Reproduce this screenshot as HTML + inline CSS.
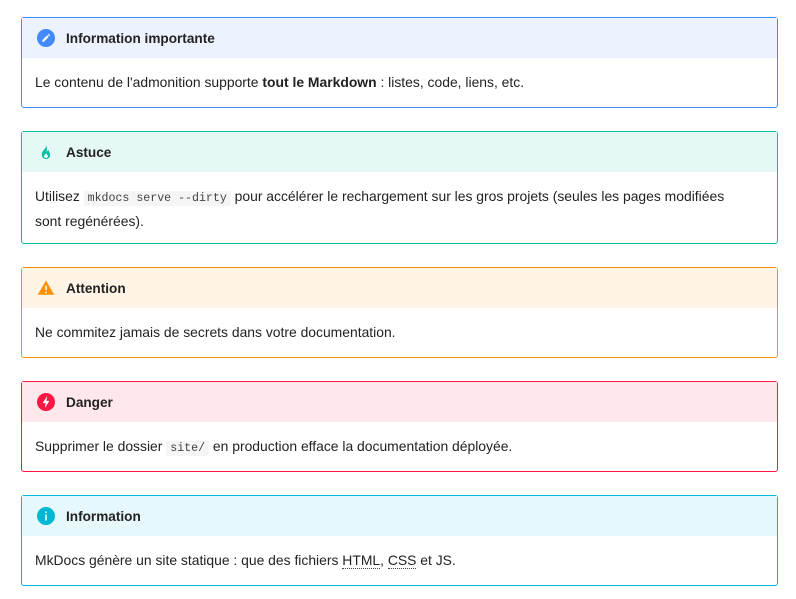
<!DOCTYPE html>
<html><head><meta charset="utf-8"><style>
body{margin:0;background:#fff;font-family:"Liberation Sans",sans-serif;font-size:13.9px;color:#222;}
.ad{position:absolute;left:21px;width:755px;border-radius:3px;}
.t{height:40px;display:flex;align-items:center;font-weight:bold;font-size:13.6px;}
.t svg{width:18px;height:18px;margin-left:15px;margin-right:11px;}
.b{padding:13px 13px 16px;line-height:22px;}
code{font-family:"Liberation Mono",monospace;font-size:11.6px;background:#f5f5f5;padding:1px 4px;color:#444;}
abbr{text-decoration:none;border-bottom:1px dotted #444;}
</style></head><body>
<div class="ad" style="top:17px;height:89px;border:1px solid #448aff">
<div class="t" style="background:#ecf3ff"><svg viewBox="0 0 24 24"><circle cx="12" cy="12" r="12" fill="#448aff"/><path d="M7 17v-2.2l6.5-6.5 2.2 2.2L9.2 17zM14.3 7.5l1.1-1.1 2.2 2.2-1.1 1.1z" fill="#fff"/></svg>Information importante</div>
<div class="b">Le contenu de l'admonition supporte <b>tout le Markdown</b> : listes, code, liens, etc.</div></div>

<div class="ad" style="top:131px;height:111px;border:1px solid #00bfa5">
<div class="t" style="background:#e6f8f5"><svg viewBox="0 0 24 24"><path d="M12 2c1 3-1 5-3 7.5S6 13 6.5 16a5.5 5.5 0 0 0 11 0c0-3-2-4.5-2.5-7-1 1.5-1.5 2.5-2.5 3C13.5 9 13.5 5 12 2z" fill="#00bfa5"/><path d="M12 20a2.5 2.5 0 0 1-2.5-2.5c0-1.5 1.5-2.5 2.5-4 .5 1.5 2.5 2.5 2.5 4A2.5 2.5 0 0 1 12 20z" fill="#fff"/></svg>Astuce</div>
<div class="b">Utilisez <code>mkdocs serve --dirty</code> pour accélérer le rechargement sur les gros projets (seules les pages modifiées<br>sont regénérées).</div></div>

<div class="ad" style="top:267px;height:89px;border:1px solid #ff9100">
<div class="t" style="background:#fff4e6"><svg viewBox="0 0 24 24"><path d="M12 2L1 21h22z" fill="#ff9100"/><path d="M11 9h2v6h-2zM11 17h2v2h-2z" fill="#fff"/></svg>Attention</div>
<div class="b">Ne commitez jamais de secrets dans votre documentation.</div></div>

<div class="ad" style="top:381px;height:89px;border:1px solid #ff1744">
<div class="t" style="background:#ffe8ec"><svg viewBox="0 0 24 24"><circle cx="12" cy="12" r="12" fill="#ff1744"/><path d="M13.5 4L7.5 13.5h4L10.5 20l6-9.5h-4z" fill="#fff"/></svg>Danger</div>
<div class="b">Supprimer le dossier <code>site/</code> en production efface la documentation déployée.</div></div>

<div class="ad" style="top:495px;height:89px;border:1px solid #00b8d4">
<div class="t" style="background:#e6f8fb"><svg viewBox="0 0 24 24"><circle cx="12" cy="12" r="12" fill="#00b8d4"/><path d="M11 10h2v8h-2zM11 6h2v2h-2z" fill="#fff"/></svg>Information</div>
<div class="b">MkDocs génère un site statique : que des fichiers <abbr>HTML</abbr>, <abbr>CSS</abbr> et JS.</div></div>
</body></html>
